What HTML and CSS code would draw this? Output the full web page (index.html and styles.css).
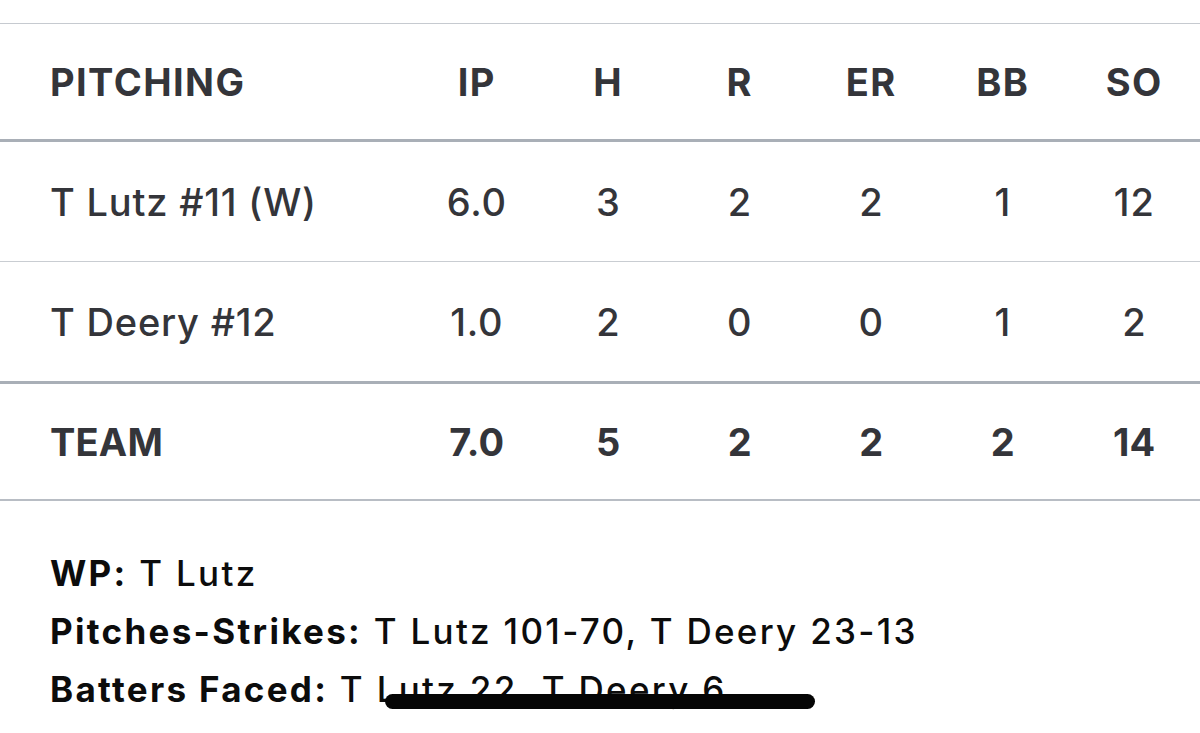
FILE: index.html
```html
<!DOCTYPE html>
<html>
<head>
<meta charset="utf-8">
<link rel="stylesheet" href="styles.css">
</head>
<body>
<div class="page">
  <div class="table">
    <div class="row head">
      <div class="name">PITCHING</div>
      <div class="c">IP</div><div class="c">H</div><div class="c">R</div><div class="c">ER</div><div class="c">BB</div><div class="c">SO</div>
    </div>
    <div class="row body thin">
      <div class="name">T Lutz #11 (W)</div>
      <div class="c">6.0</div><div class="c">3</div><div class="c">2</div><div class="c">2</div><div class="c">1</div><div class="c">12</div>
    </div>
    <div class="row body thick">
      <div class="name">T Deery #12</div>
      <div class="c">1.0</div><div class="c">2</div><div class="c">0</div><div class="c">0</div><div class="c">1</div><div class="c">2</div>
    </div>
    <div class="row team">
      <div class="name">TEAM</div>
      <div class="c">7.0</div><div class="c">5</div><div class="c">2</div><div class="c">2</div><div class="c">2</div><div class="c">14</div>
    </div>
  </div>
  <div class="notes">
    <p><b>WP:</b> T Lutz</p>
    <p><b>Pitches-Strikes:</b> T Lutz 101-70, T Deery 23-13</p>
    <p><b>Batters Faced:</b> T Lutz 22, T Deery 6</p>
    <span class="scribble"></span>
  </div>
</div>
</body>
</html>
```
FILE: styles.css
```css
html, body { margin: 0; padding: 0; background: #fff; }
body { font-family: Inter, "Liberation Sans", sans-serif; color: #34353a; width: 1200px; height: 733px; overflow: hidden; }
.page { padding-top: 23px; }
.table { border-top: 1px solid #c6cad0; }
.row { display: grid; grid-template-columns: 411px repeat(6, 131.5px); align-items: center; }
.name { padding-left: 50px; }
.c { text-align: center; }
.head { height: 115px; border-bottom: 3px solid #a9afb7; font-weight: 700; font-size: 38px; letter-spacing: 1.4px; }
.body { height: 119px; font-size: 38px; font-weight: 500; letter-spacing: 0.8px; }
.body.thin { border-bottom: 1px solid #c9cdd2; }
.body.thick { border-bottom: 3px solid #a9afb7; }
.team { height: 115px; border-bottom: 2px solid #b8bdc4; font-weight: 700; font-size: 38px; letter-spacing: 0.2px; }
.notes { position: relative; padding: 43px 0 0 50px; color: #0c0c0c; font-size: 35px; font-weight: 500; letter-spacing: 2.3px; }
.notes p { margin: 0; height: 58px; line-height: 58px; white-space: nowrap; }
.notes b { font-weight: 700; }
.scribble { position: absolute; left: 385px; top: 193px; width: 430px; height: 15px; background: #050505; border-radius: 8px; }
```
